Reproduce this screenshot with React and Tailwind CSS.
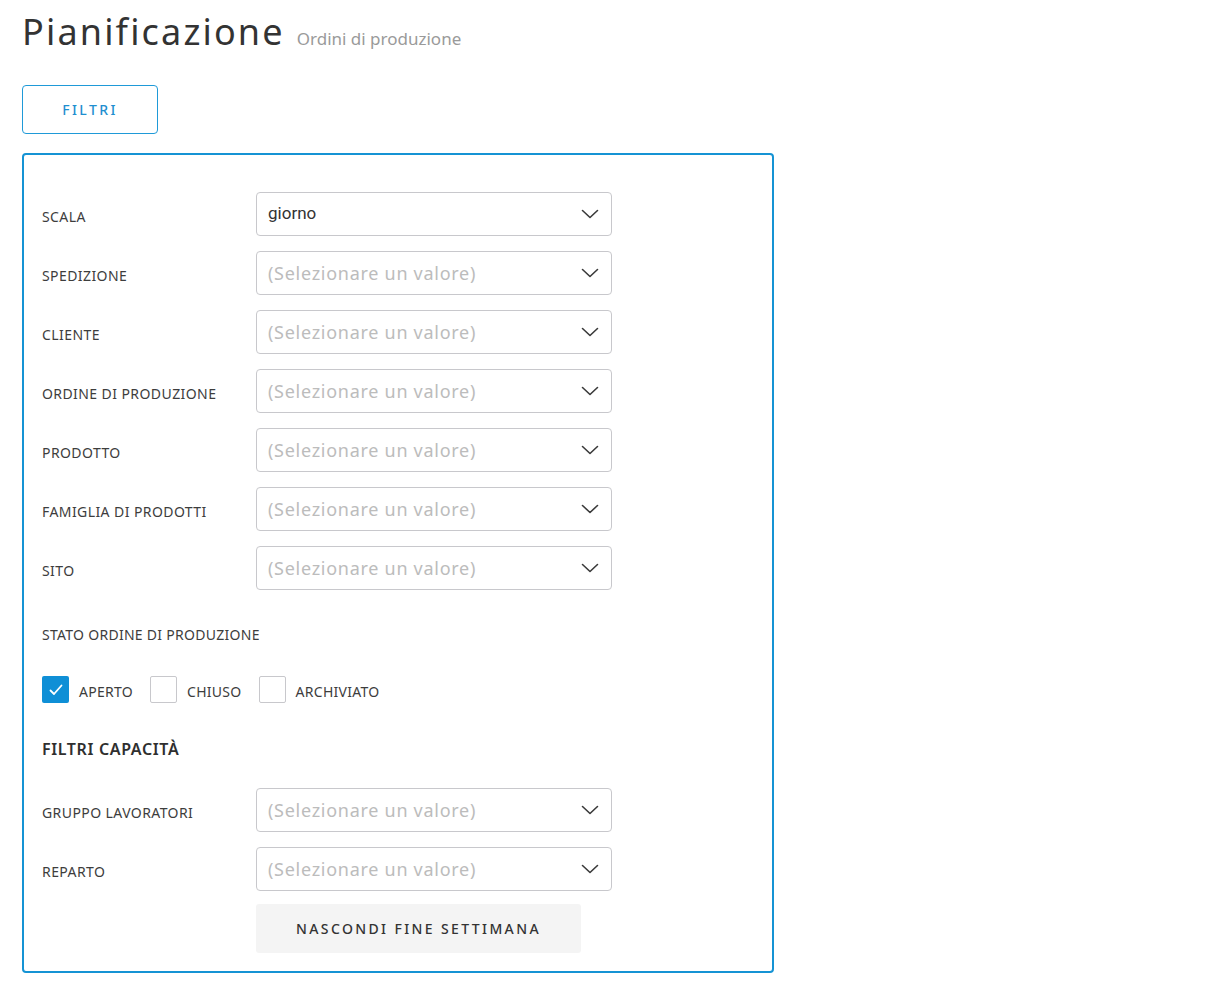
const FONT = { fontFamily: '"Noto Sans", "Open Sans", sans-serif' };

function Chevron() {
  return (
    <svg className="h-[10px] w-[18px]" viewBox="0 0 18 10" fill="none" aria-hidden="true">
      <path d="M1.5 1.5 9 8.5l7.5-7" stroke="#3a3a3a" strokeWidth="1.6" strokeLinecap="round" strokeLinejoin="round" />
    </svg>
  );
}

function SelectRow({ label, value }) {
  return (
    <div className="flex items-center">
      <div className="w-[214px] pt-[4px] text-[14px] tracking-[0.03em] text-[#3d3d3d]">{label}</div>
      <div className="flex h-[44px] w-[356px] items-center justify-between rounded-[4px] border border-[#c8c8cc] pl-[11px] pr-[12px]">
        {value ? (
          <span className="text-[17px] text-[#333]" style={{ fontFamily: 'Roboto, "Liberation Sans", sans-serif' }}>{value}</span>
        ) : (
          <span className="text-[18px] tracking-[0.04em] text-[#bcbcbc]">(Selezionare un valore)</span>
        )}
        <Chevron />
      </div>
    </div>
  );
}

function Checkbox({ checked, label }) {
  return (
    <label className="flex items-center gap-[10px]">
      {checked ? (
        <span className="grid size-[27px] place-items-center rounded-[2px] bg-[#0f8fd6]">
          <svg className="size-[16px]" viewBox="0 0 16 16" fill="none" aria-hidden="true">
            <path d="M2.5 8.5 6 12l7.5-8.5" stroke="white" strokeWidth="1.8" strokeLinecap="round" strokeLinejoin="round" />
          </svg>
        </span>
      ) : (
        <span className="size-[27px] rounded-[2px] border border-[#c8c8cc] bg-white" />
      )}
      <span className="pt-[3px] text-[14px] tracking-[0.02em] text-[#3d3d3d]">{label}</span>
    </label>
  );
}

export default function App() {
  return (
    <div className="min-h-[988px] w-[1228px] bg-white px-[22px] pt-[8px]" style={FONT}>
      <div className="flex items-baseline gap-[12px]">
        <h1 className="text-[36px] leading-[48px] tracking-[0.06em] text-[#333]">Pianificazione</h1>
        <span className="text-[17px] text-[#9a9a9a]">Ordini di produzione</span>
      </div>

      <button className="mt-[29px] h-[49px] w-[136px] rounded-[4px] border border-[#1f9ad8] text-[14px] font-medium tracking-[0.17em] text-[#1f8fd0]">
        FILTRI
      </button>

      <div className="mt-[19px] w-[752px] rounded-[4px] border-2 border-[#1593d4] pb-[18px] pl-[18px] pt-[37px]">
        <div className="flex flex-col gap-[15px]">
          <SelectRow label="SCALA" value="giorno" />
          <SelectRow label="SPEDIZIONE" />
          <SelectRow label="CLIENTE" />
          <SelectRow label="ORDINE DI PRODUZIONE" />
          <SelectRow label="PRODOTTO" />
          <SelectRow label="FAMIGLIA DI PRODOTTI" />
          <SelectRow label="SITO" />
        </div>

        <div className="mt-[34px] text-[14px] tracking-[0.02em] text-[#3d3d3d]">STATO ORDINE DI PRODUZIONE</div>

        <div className="mt-[31px] flex items-center gap-[17px]">
          <Checkbox checked label="APERTO" />
          <Checkbox label="CHIUSO" />
          <Checkbox label="ARCHIVIATO" />
        </div>

        <div className="mt-[34px] text-[16px] font-semibold tracking-[0.04em] text-[#2f2f2f]">FILTRI CAPACITÀ</div>

        <div className="mt-[27px] flex flex-col gap-[15px]">
          <SelectRow label="GRUPPO LAVORATORI" />
          <SelectRow label="REPARTO" />
        </div>

        <button className="ml-[214px] mt-[13px] h-[49px] w-[325px] rounded-[3px] bg-[#f4f4f4] text-[14px] font-medium tracking-[0.17em] text-[#333]">
          NASCONDI FINE SETTIMANA
        </button>
      </div>
    </div>
  );
}
